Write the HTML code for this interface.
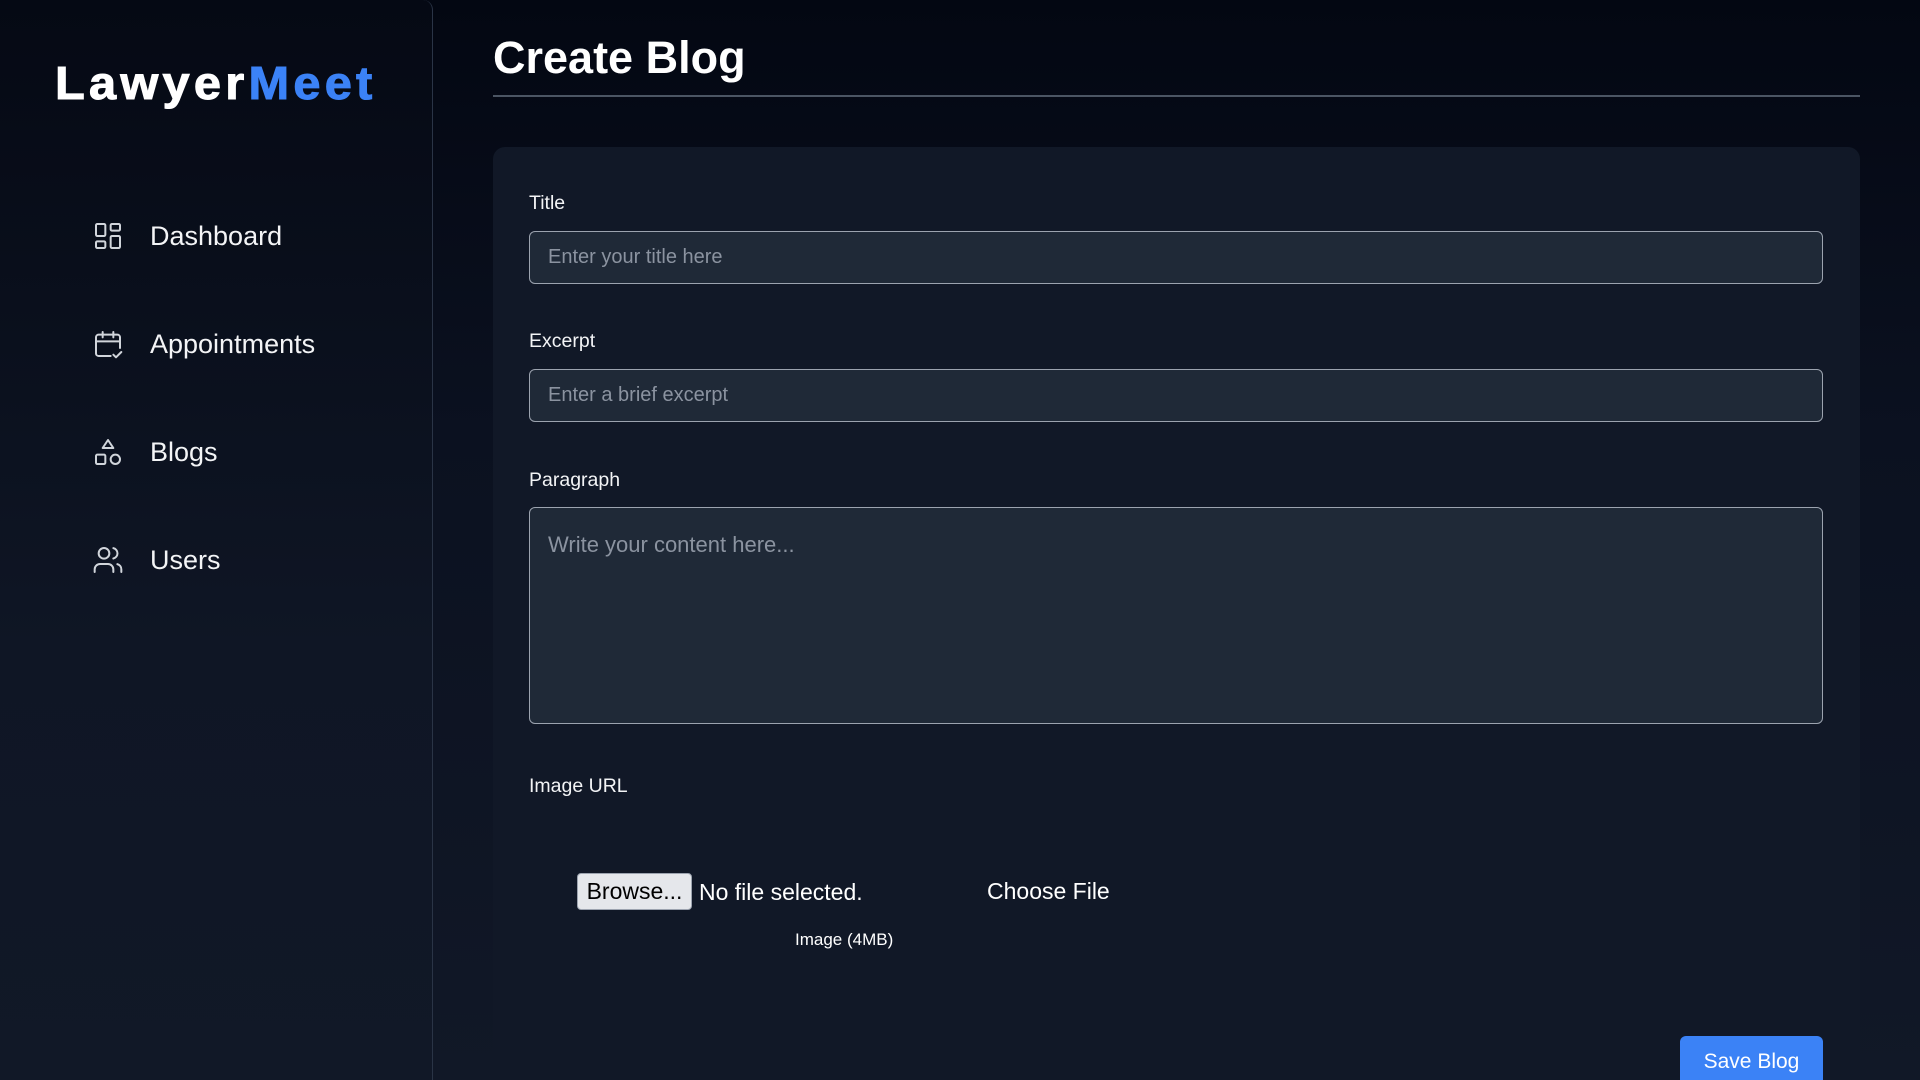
<!DOCTYPE html>
<html style="width:1920px;height:1080px;overflow:hidden"><head><style>
*{box-sizing:border-box;margin:0;padding:0}
body{width:1920px;height:1080px;overflow:hidden;background:linear-gradient(#030712,#0b1120 40%,#111827);font-family:"Liberation Sans",sans-serif;color:#fff;position:relative}
.side{position:absolute;left:0;top:0;width:433px;height:1080px;border-right:1px solid #2a3446;border-top-right-radius:10px;background:linear-gradient(#050914,#0f1625 60%,#111827)}
.logo{position:absolute;left:55px;top:56px;font-size:46px;font-weight:900;letter-spacing:4px;transform:scaleX(1.06);transform-origin:left;-webkit-text-stroke:1px currentColor}
.logo span{color:#3b82f6}
.nav{position:absolute;left:92px;display:flex;align-items:center;font-size:27px;color:#f3f4f6}
.nav svg{width:32px;height:32px;margin-right:26px;fill:none;stroke:#d1d5db;stroke-width:1.5;stroke-linecap:round;stroke-linejoin:round}
h1{position:absolute;left:493px;top:32px;font-size:45px;font-weight:bold}
.rule{position:absolute;left:493px;top:95px;width:1367px;height:2px;background:#4b5563}
.card{position:absolute;left:493px;top:147px;width:1367px;height:933px;background:#111827;border-radius:12px 12px 0 0}
.lbl{position:absolute;left:529px;font-size:19.5px;color:#f3f4f6}
.inp{position:absolute;left:529px;width:1294px;background:#1f2937;border:1px solid #9ca3af;border-radius:6px;color:#8b93a0;font-size:20px;padding-left:18px}
.btn{position:absolute;left:577px;top:873px;width:115px;height:37px;background:#e5e7eb;border:1px solid #9ca3af;border-radius:4px;color:#000;font-size:23px;text-align:center;line-height:35px}
</style></head><body>
<div class="side">
<div class="logo">Lawyer<span>Meet</span></div>
<div class="nav" style="top:220px"><svg viewBox="0 0 24 24"><rect x="3" y="3" width="7" height="9" rx="1"/><rect x="14" y="3" width="7" height="5" rx="1"/><rect x="14" y="12" width="7" height="9" rx="1"/><rect x="3" y="16" width="7" height="5" rx="1"/></svg>Dashboard</div>
<div class="nav" style="top:328px"><svg viewBox="0 0 24 24"><path d="M3 7a2 2 0 0 1 2-2h14a2 2 0 0 1 2 2v8M3 7v12a2 2 0 0 0 2 2h9M3 10h18M8 3v4M16 3v4M16 20l2 2 4-4"/></svg>Appointments</div>
<div class="nav" style="top:436px"><svg viewBox="0 0 24 24"><path d="M12 3l4 6H8z"/><rect x="3" y="14" width="7" height="7" rx="1"/><circle cx="17.5" cy="17.5" r="3.5"/></svg>Blogs</div>
<div class="nav" style="top:544px"><svg viewBox="0 0 24 24"><circle cx="9" cy="7" r="4"/><path d="M2 21v-2a4 4 0 0 1 4-4h6a4 4 0 0 1 4 4v2M16 3.1a4 4 0 0 1 0 7.8M22 21v-2a4 4 0 0 0-3-3.9"/></svg>Users</div>
</div>
<h1>Create Blog</h1>
<div class="rule"></div>
<div class="card"></div>
<div class="lbl" style="top:192px">Title</div>
<div class="inp" style="top:231px;height:53px;line-height:51px">Enter your title here</div>
<div class="lbl" style="top:330px">Excerpt</div>
<div class="inp" style="top:369px;height:53px;line-height:51px">Enter a brief excerpt</div>
<div class="lbl" style="top:469px">Paragraph</div>
<div class="inp" style="top:507px;height:217px;padding-top:24px;font-size:22px">Write your content here...</div>
<div class="lbl" style="top:775px">Image URL</div>
<div class="btn">Browse...</div>
<div style="position:absolute;left:699px;top:879px;font-size:23px">No file selected.</div>
<div style="position:absolute;left:987px;top:878px;font-size:23px">Choose File</div>
<div style="position:absolute;left:795px;top:930px;font-size:17px">Image (4MB)</div>
<div style="position:absolute;left:1680px;top:1036px;width:143px;height:44px;background:#3b82f6;border-radius:6px 6px 0 0;font-size:21px;text-align:center;padding-top:14px">Save Blog</div>
</body></html>
